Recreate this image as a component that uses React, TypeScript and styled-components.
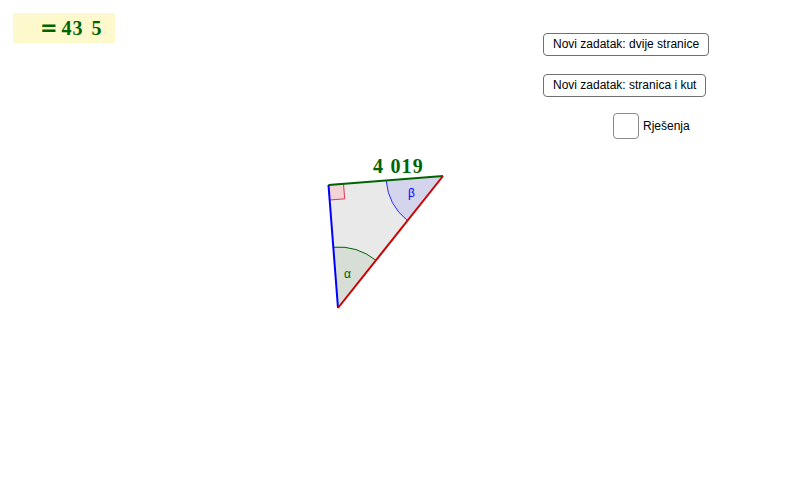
import React from "react"
import styled, { createGlobalStyle } from "styled-components"

const GlobalStyle = createGlobalStyle`
    html, body {
        margin: 0;
        padding: 0;
        background: white;
    }
    body {
        font-family: "Liberation Sans", Arial, sans-serif;
    }
`

const Stage = styled.div`
    position: relative;
    width: 800px;
    height: 480px;
    overflow: hidden;
    background: white;
`

const Canvas = styled.svg`
    position: absolute;
    inset: 0;
`

const ResultBox = styled.div`
    position: absolute;
    left: 13px;
    top: 13px;
    width: 102px;
    height: 30px;
    box-sizing: border-box;
    padding-left: 27px;
    display: flex;
    align-items: center;
    background: #fdf9cc;
    color: #006400;
    font-family: "Liberation Serif", "Times New Roman", serif;
    font-weight: bold;
    font-size: 20px;
    letter-spacing: 1px;
`

const Equals = styled.span`
    font-family: "DejaVu Sans", sans-serif;
    font-weight: bold;
    font-size: 21px;
    letter-spacing: 0;
    margin-right: 4px;
`

const Gap = styled.span<{w : number}>`
    display: inline-block;
    width: ${props=>props.w}px;
`

const Controls = styled.div`
    position: absolute;
    left: 543px;
    top: 33px;
    display: flex;
    flex-direction: column;
    align-items: flex-start;
    gap: 18px;
`

const Button = styled.button`
    height: 23px;
    padding: 0 9px;
    box-sizing: border-box;
    border: 1px solid #707070;
    border-radius: 4px;
    background: white;
    color: black;
    font-family: "Liberation Sans", Arial, sans-serif;
    font-size: 12px;
    line-height: 21px;
    white-space: nowrap;
    cursor: pointer;
`

const CheckRow = styled.label`
    display: flex;
    align-items: center;
    gap: 4px;
    margin-left: 70px;
    margin-top: -2px;
    font-size: 12px;
    color: black;
`

const CheckBox = styled.span`
    width: 26px;
    height: 26px;
    box-sizing: border-box;
    border: 1px solid #8a8a8a;
    border-radius: 4px;
    background: white;
`

const Triangle = () => (
    <Canvas width="800" height="480" viewBox="0 0 800 480">
        <polygon points="328.5,185 443,176 338,308" fill="#e9e9e9" />
        <path d="M 443 176 L 386.2 180.5 A 57 57 0 0 0 407.5 220.6 Z" fill="#d4d4ec" stroke="none" />
        <path d="M 386.2 180.5 A 57 57 0 0 0 407.5 220.6" fill="none" stroke="#2a2aff" strokeWidth="1" />
        <path d="M 338 308 L 333.3 247.2 A 61 61 0 0 1 376 260.3 Z" fill="#d6ded6" stroke="none" />
        <path d="M 333.3 247.2 A 61 61 0 0 1 376 260.3" fill="none" stroke="#006400" strokeWidth="1" />
        <polygon points="328.5,185 343.5,183.8 344.7,198.8 329.7,200" fill="#f1d3d8" stroke="#e0394f" strokeWidth="1" />
        <line x1="328.5" y1="185" x2="443" y2="176" stroke="#006400" strokeWidth="2" />
        <line x1="328.5" y1="185" x2="338" y2="308" stroke="#0000ff" strokeWidth="2" />
        <line x1="443" y1="176" x2="338" y2="308" stroke="#cc0000" strokeWidth="2" />
        <text x="344" y="278" fill="#006400" fontSize="12" fontFamily="Liberation Sans, Arial, sans-serif">α</text>
        <text x="408" y="197" fill="#0000ff" fontSize="12" fontFamily="Liberation Sans, Arial, sans-serif">β</text>
        <text x="373" y="173" fill="#006400" fontSize="20" fontWeight="bold" letterSpacing="1.2" fontFamily="Liberation Serif, Times New Roman, serif">4 019</text>
    </Canvas>
)

export default function App(){
    return (
        <Stage>
            <GlobalStyle />
            <Triangle />
            <ResultBox>
                <Equals>=</Equals>43<Gap w={8} />5
            </ResultBox>
            <Controls>
                <Button>Novi zadatak: dvije stranice</Button>
                <Button>Novi zadatak: stranica i kut</Button>
                <CheckRow>
                    <CheckBox />
                    Rješenja
                </CheckRow>
            </Controls>
        </Stage>
    )
}
